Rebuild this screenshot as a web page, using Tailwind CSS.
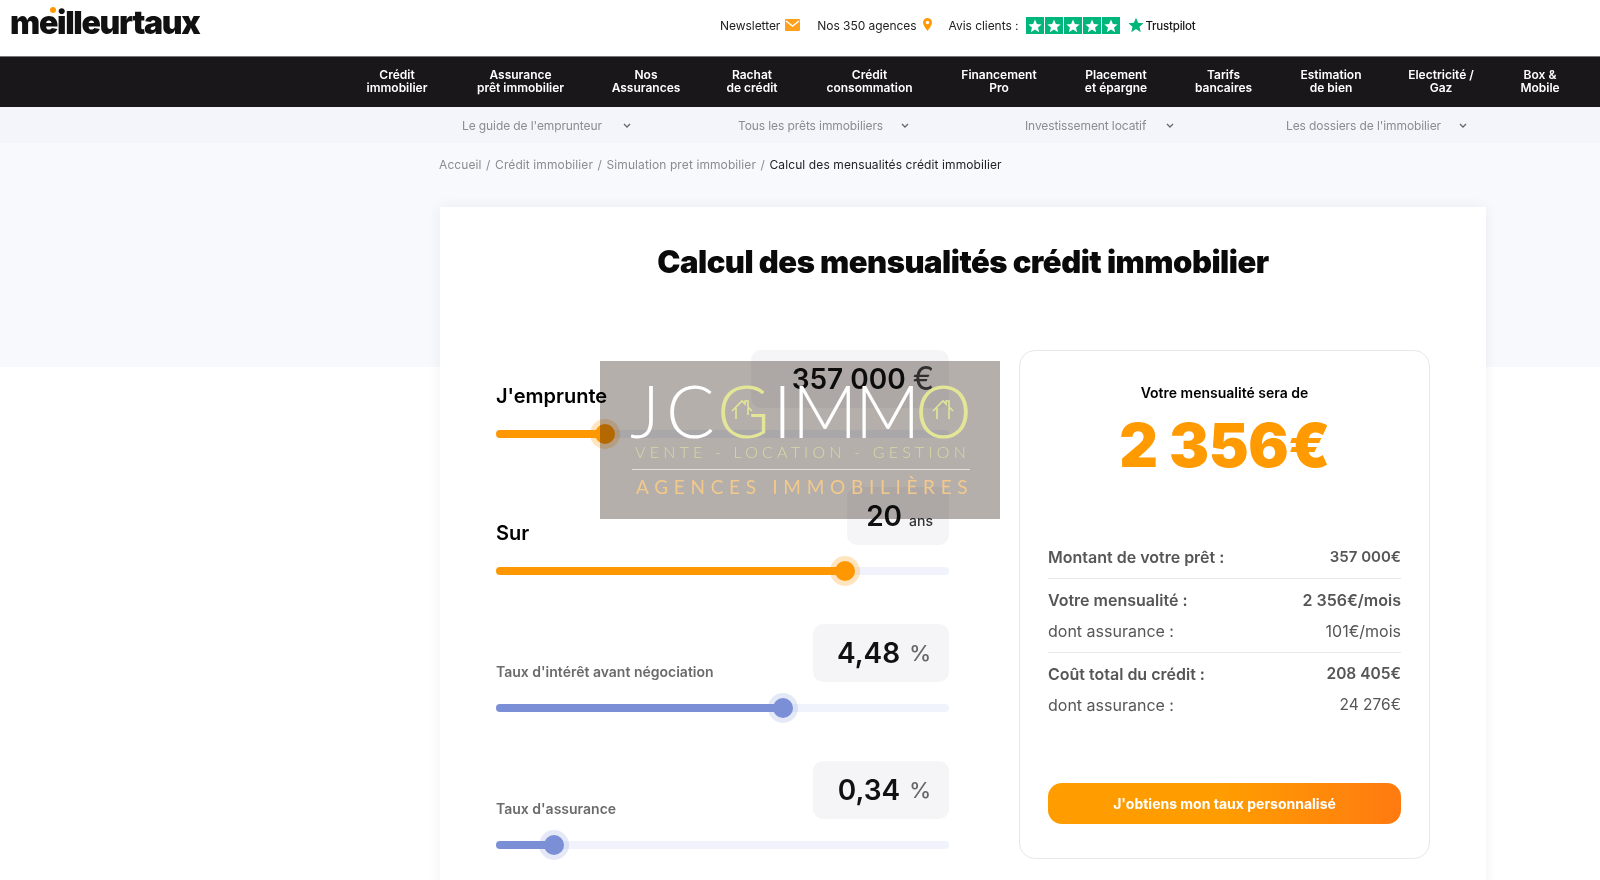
<!doctype html>
<html lang="fr">
<head>
<meta charset="UTF-8" />
<title>Calcul des mensualités crédit immobilier</title>
<script src="https://cdn.jsdelivr.net/npm/@tailwindcss/browser@4"></script>
</head>
<body class="bg-white font-[Inter,sans-serif] text-black">
<div class="relative h-[880px] overflow-hidden">

  <!-- Top bar -->
  <header class="flex h-[56px] items-center relative">
    <div class="relative ml-[10px] w-[200px] -mt-[11px]">
      <span class="text-[32px] leading-[36px] font-black tracking-[-1.3px] text-[#111]">meilleurtaux</span>
      <span class="absolute left-[40px] top-[2px] w-[6px] h-[6px] rounded-full bg-[#ff9a00]"></span>
    </div>
    <div class="flex items-center ml-[510px] -mt-[4px] text-[12px] tracking-[-0.05px] text-[#222]">
      <span>Newsletter</span>
      <svg class="ml-[5px] -mt-[2px]" width="15" height="12" viewBox="0 0 15 12"><rect width="15" height="12" rx="1" fill="#ff9f1c"/><path d="M1 2l6.500 5L14 2" fill="none" stroke="#fff" stroke-width="1.400"/></svg>
      <span class="ml-[17px]">Nos 350 agences</span>
      <svg class="ml-[6px] -mt-[3px]" width="9" height="13" viewBox="0 0 9 13"><path d="M4.500 0C2 0 0 2 0 4.500C0 7.500 4.500 13 4.500 13S9 7.500 9 4.500C9 2 7 0 4.500 0z" fill="#ff9a00"/><circle cx="4.500" cy="4.500" r="1.700" fill="#fff"/></svg>
      <span class="ml-[17px]">Avis clients :</span>
      <div class="flex gap-[1px] ml-[8px] -mt-[1px]">
        <span class="w-[18px] h-[17px] bg-[#00b67a] flex items-center justify-center"><svg width="14" height="14" viewBox="0 0 24 24"><path d="M12 1l3.200 7.600 8.200.7-6.200 5.400 1.900 8L12 18l-7.100 4.700 1.900-8L.6 9.300l8.200-.7z" fill="#fff"/></svg></span>
        <span class="w-[18px] h-[17px] bg-[#00b67a] flex items-center justify-center"><svg width="14" height="14" viewBox="0 0 24 24"><path d="M12 1l3.200 7.600 8.200.7-6.200 5.400 1.900 8L12 18l-7.100 4.700 1.900-8L.6 9.300l8.200-.7z" fill="#fff"/></svg></span>
        <span class="w-[18px] h-[17px] bg-[#00b67a] flex items-center justify-center"><svg width="14" height="14" viewBox="0 0 24 24"><path d="M12 1l3.200 7.600 8.200.7-6.200 5.400 1.900 8L12 18l-7.100 4.700 1.900-8L.6 9.300l8.200-.7z" fill="#fff"/></svg></span>
        <span class="w-[18px] h-[17px] bg-[#00b67a] flex items-center justify-center"><svg width="14" height="14" viewBox="0 0 24 24"><path d="M12 1l3.200 7.600 8.200.7-6.200 5.400 1.900 8L12 18l-7.100 4.700 1.900-8L.6 9.300l8.200-.7z" fill="#fff"/></svg></span>
        <span class="w-[18px] h-[17px] bg-[#00b67a] flex items-center justify-center"><svg width="14" height="14" viewBox="0 0 24 24"><path d="M12 1l3.200 7.600 8.200.7-6.200 5.400 1.900 8L12 18l-7.100 4.700 1.900-8L.6 9.300l8.200-.7z" fill="#fff"/></svg></span>
      </div>
      <svg class="ml-[8px] -mt-[3px]" width="16" height="16" viewBox="0 0 24 24"><path d="M12 1l3.200 7.600 8.200.7-6.200 5.400 1.900 8L12 18l-7.100 4.700 1.900-8L.6 9.300l8.200-.7z" fill="#00b67a"/></svg>
      <span class="ml-[1px] mt-[2px] text-[11.5px] tracking-[-0.2px] font-medium text-[#191919]">Trustpilot</span>
    </div>
  </header>

  <!-- Main nav -->
  <nav class="flex h-[51px] pl-[342px] pb-[2px] items-center bg-[#19171a] text-white text-[12px] leading-[13.5px] font-semibold text-center border-t border-[#777]">
    <a class="w-[110px]">Crédit<br />immobilier</a>
    <a class="w-[137px]">Assurance<br />prêt immobilier</a>
    <a class="w-[114px]">Nos<br />Assurances</a>
    <a class="w-[98px]">Rachat<br />de crédit</a>
    <a class="w-[137px]">Crédit<br />consommation</a>
    <a class="w-[122px]">Financement<br />Pro</a>
    <a class="w-[112px]">Placement<br />et épargne</a>
    <a class="w-[103px]">Tarifs<br />bancaires</a>
    <a class="w-[112px]">Estimation<br />de bien</a>
    <a class="w-[108px]">Electricité /<br />Gaz</a>
    <a class="w-[90px]">Box &amp;<br />Mobile</a>
  </nav>

  <!-- Sub nav -->
  <div class="flex h-[36px] pl-[462px] pt-[2px] items-center bg-[#f3f5fa] text-[12px] tracking-[-0.1px] text-[#8b8b90]">
    <div class="w-[276px] flex items-center gap-[21px]">
      <span>Le guide de l'emprunteur</span>
      <svg width="8" height="6" viewBox="0 0 8 6"><path d="M1 1l3 3 3-3" fill="none" stroke="#666" stroke-width="1.300"/></svg>
    </div>
    <div class="w-[287px] flex items-center gap-[18px]">
      <span>Tous les prêts immobiliers</span>
      <svg width="8" height="6" viewBox="0 0 8 6"><path d="M1 1l3 3 3-3" fill="none" stroke="#666" stroke-width="1.300"/></svg>
    </div>
    <div class="w-[261px] flex items-center gap-[20px]">
      <span>Investissement locatif</span>
      <svg width="8" height="6" viewBox="0 0 8 6"><path d="M1 1l3 3 3-3" fill="none" stroke="#666" stroke-width="1.300"/></svg>
    </div>
    <div class="flex items-center gap-[18px]">
      <span>Les dossiers de l'immobilier</span>
      <svg width="8" height="6" viewBox="0 0 8 6"><path d="M1 1l3 3 3-3" fill="none" stroke="#666" stroke-width="1.300"/></svg>
    </div>
  </div>

  <!-- Breadcrumb band -->
  <div class="h-[224px] bg-[#f8f9fd] pl-[439px] pt-[14px] text-[12px] leading-[15px] tracking-[0.1px] text-[#8b8b90]">
    <span>Accueil</span> <span class="mx-[1px]">/</span> <span>Crédit immobilier</span> <span class="mx-[1px]">/</span> <span>Simulation pret immobilier</span> <span class="mx-[1px]">/</span> <span class="text-[#222]">Calcul des mensualités crédit immobilier</span>
  </div>

  <!-- Calculator card -->
  <main class="relative -mt-[160px] ml-[440px] w-[1046px] h-[700px] bg-white shadow-[0_0_12px_rgba(40,50,90,0.07)] px-[56px]">
    <h1 class="pt-[37px] h-[143px] text-center text-[31px] leading-[36px] font-black tracking-[-0.5px] text-[#0a0a0a]">Calcul des mensualités crédit immobilier</h1>

    <div class="flex justify-between">
      <!-- Sliders -->
      <div class="w-[453px]">
        <div class="h-[137px]">
          <div class="flex items-end justify-between h-[58px]">
            <span class="text-[20px] leading-[28px] font-semibold mb-[-2px]">J'emprunte</span>
            <div class="w-[198px] h-[58px] rounded-[10px] bg-[#f5f5f8] flex items-center justify-end pr-[15px] gap-[7px]">
              <span class="text-[28px] font-semibold text-[#111]">357 000</span>
              <span class="text-[32px] text-[#444]">€</span>
            </div>
          </div>
          <div class="relative mt-[22px] h-[8px] rounded-full bg-[#f0f3fc]">
            <div class="h-[8px] w-[109px] rounded-full bg-[#ff9800]"></div>
            <span class="absolute left-[99px] -top-[6px] w-[20px] h-[20px] rounded-full bg-[#ff9800] ring-[5px] ring-[#ff9800]/25"></span>
          </div>
        </div>
        <div class="h-[137px]">
          <div class="flex items-end justify-between h-[58px]">
            <span class="text-[20px] leading-[28px] font-semibold mb-[-2px]">Sur</span>
            <div class="w-[102px] h-[58px] rounded-[10px] bg-[#f5f5f8] flex items-center justify-end pr-[16px] gap-[7px]">
              <span class="text-[28px] font-semibold text-[#111]">20</span>
              <span class="text-[14px] font-medium text-[#333] mt-[8px]">ans</span>
            </div>
          </div>
          <div class="relative mt-[22px] h-[8px] rounded-full bg-[#f0f3fc]">
            <div class="h-[8px] w-[349px] rounded-full bg-[#ff9800]"></div>
            <span class="absolute left-[339px] -top-[6px] w-[20px] h-[20px] rounded-full bg-[#ff9800] ring-[5px] ring-[#ff9800]/25"></span>
          </div>
        </div>
        <div class="h-[137px]">
          <div class="flex items-end justify-between h-[58px]">
            <span class="text-[14px] leading-[20px] font-semibold text-[#6b6b6b]">Taux d'intérêt avant négociation</span>
            <div class="w-[136px] h-[58px] rounded-[10px] bg-[#f5f5f8] flex items-center justify-end pr-[18px] gap-[9px]">
              <span class="text-[28px] font-semibold text-[#111]">4,48</span>
              <span class="text-[22px] font-medium text-[#666]">%</span>
            </div>
          </div>
          <div class="relative mt-[22px] h-[8px] rounded-full bg-[#f0f3fc]">
            <div class="h-[8px] w-[287px] rounded-full bg-[#7b8fd6]"></div>
            <span class="absolute left-[277px] -top-[6px] w-[20px] h-[20px] rounded-full bg-[#7b8fd6] ring-[5px] ring-[#7b8fd6]/20"></span>
          </div>
        </div>
        <div class="h-[137px]">
          <div class="flex items-end justify-between h-[58px]">
            <span class="text-[14px] leading-[20px] font-semibold text-[#6b6b6b]">Taux d'assurance</span>
            <div class="w-[136px] h-[58px] rounded-[10px] bg-[#f5f5f8] flex items-center justify-end pr-[18px] gap-[9px]">
              <span class="text-[28px] font-semibold text-[#111]">0,34</span>
              <span class="text-[22px] font-medium text-[#666]">%</span>
            </div>
          </div>
          <div class="relative mt-[22px] h-[8px] rounded-full bg-[#f0f3fc]">
            <div class="h-[8px] w-[58px] rounded-full bg-[#7b8fd6]"></div>
            <span class="absolute left-[48px] -top-[6px] w-[20px] h-[20px] rounded-full bg-[#7b8fd6] ring-[5px] ring-[#7b8fd6]/20"></span>
          </div>
        </div>
      </div>

      <!-- Result panel -->
      <aside class="w-[411px] h-[509px] rounded-[16px] border border-[#e8e8ea] px-[28px] pt-[32px]">
        <p class="text-center text-[14px] leading-[20px] font-semibold">Votre mensualité sera de</p>
        <p class="text-center text-[60px] leading-[70px] font-black text-[#ff9a00] mt-[7px] tracking-[-0.5px]">2 356€</p>
        <div class="mt-[66px] text-[16px] leading-[22px] text-[#565656]">
          <div class="flex justify-between font-semibold pb-[10px] border-b border-[#e8e8ea]"><span>Montant de votre prêt :</span><span class="text-[15px]">357 000€</span></div>
          <div class="flex justify-between font-semibold mt-[10px]"><span>Votre mensualité :</span><span>2 356€/mois</span></div>
          <div class="flex justify-between mt-[9px] pb-[10px] border-b border-[#e8e8ea]"><span>dont assurance :</span><span>101€/mois</span></div>
          <div class="flex justify-between font-semibold mt-[10px]"><span>Coût total du crédit :</span><span class="text-[15.5px]">208 405€</span></div>
          <div class="flex justify-between mt-[9px]"><span>dont assurance :</span><span class="text-[15.5px]">24 276€</span></div>
        </div>
        <button class="mt-[67px] w-full h-[41px] rounded-[14px] bg-gradient-to-r from-[#ff9c00] from-50% to-[#ff7a10] text-white text-[14px] font-bold">J'obtiens mon taux personnalisé</button>
      </aside>
    </div>
  </main>

  <!-- Watermark over the page -->
  <div class="absolute left-[600px] top-[361px] w-[400px] h-[158px]">
    <div class="absolute inset-0 bg-[#b4afab] mix-blend-multiply"></div>
    <div class="absolute left-[30px] top-[14px] flex items-center h-[70px] font-[Lato,sans-serif] font-light text-[72px] leading-[70px] text-white">
      <span class="w-[37px]">J</span>
      <span class="w-[51px] -ml-[1px]">C</span>
      <span class="relative w-[53px] text-[#e3e697]">G
        <svg class="absolute left-[13px] top-[23px]" width="24" height="24" viewBox="0 0 24 24"><path d="M2 13L12 3l3 3V3h3v6l4 4M6 10v11M18 10v7" fill="none" stroke="#e3e697" stroke-width="1.600"/></svg>
      </span>
      <span class="w-[19px] ml-[3px]">I</span>
      <span class="w-[63px]">M</span>
      <span class="w-[60px]">M</span>
      <span class="relative w-[52px] text-[#e3e697]">O
        <svg class="absolute left-[16px] top-[23px]" width="24" height="24" viewBox="0 0 24 24"><path d="M2 13L12 3l3 3V3h3v6l4 4M6 10v11M18 10v11" fill="none" stroke="#e3e697" stroke-width="1.600"/></svg>
      </span>
    </div>
    <div class="absolute left-[35px] top-[82px] font-[Lato,sans-serif] font-light text-[16px] leading-[18px] tracking-[4.2px] text-[#d9d9a4] whitespace-nowrap">VENTE - LOCATION - GESTION</div>
    <div class="absolute left-[32px] top-[108px] w-[338px] h-[1px] bg-[#e6e0d8]"></div>
    <div class="absolute left-[36px] top-[115px] font-[Lato,sans-serif] font-normal text-[19px] leading-[22px] tracking-[5.7px] text-[#f3c98b] whitespace-nowrap">AGENCES IMMOBILIÈRES</div>
  </div>
</div>
</body>
</html>
